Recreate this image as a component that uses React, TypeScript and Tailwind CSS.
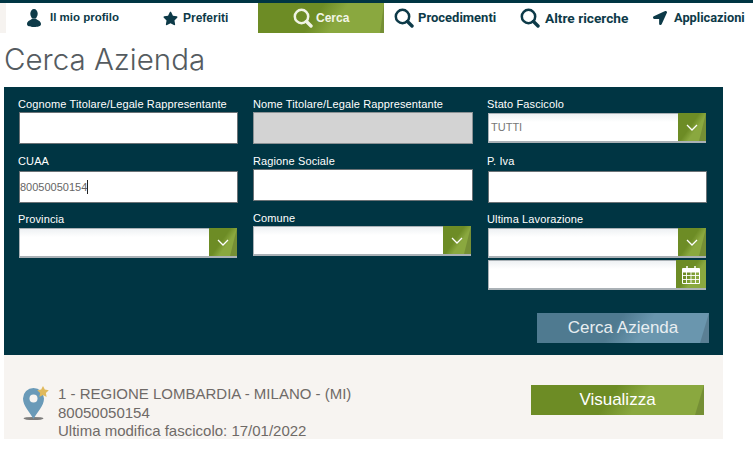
import { FaLocationArrow, FaStar } from 'react-icons/fa';

const greenButton = 'bg-[linear-gradient(125deg,#6d8c25_0%,#6d8c25_45%,#8aa83f_62%,#8aa83f_100%)]';

function Corner({ w = 'w-[9px]' }: { w?: string }) {
  return <span className={`absolute right-0 top-0 bottom-0 ${w} bg-[#000]/15 [clip-path:polygon(100%_0,100%_100%,0_100%)]`} />;
}

function Label({ children, className = '' }: { children: string; className?: string }) {
  return <label className={`block h-[14px] text-[11px] leading-[14px] tracking-[0.12px] text-white whitespace-nowrap ${className}`}>{children}</label>;
}

function TextInput({ value, disabled, caret }: { value?: string; disabled?: boolean; caret?: boolean }) {
  return (
    <div className={`flex items-center h-[32px] w-full border text-[11px] text-[#666] ${disabled ? 'bg-[#d3d3d3] border-[#8b9194]' : 'bg-white border-[#6b7276]'}`}>
      {value}
      {caret && <span className="w-px h-[14px] bg-[#222]" />}
    </div>
  );
}

function Chevron() {
  return (
    <svg width="12" height="7" viewBox="0 0 12 7" fill="none" stroke="#fff" strokeWidth="1.3">
      <path d="M1 1l5 5 5-5" />
    </svg>
  );
}

function SelectBox({ value }: { value?: string }) {
  return (
    <div className="flex h-[30px] w-[218px] border-b-2 border-[#aab1b6]">
      <div className="flex-1 flex items-center pl-[2px] border-l border-t border-[#aab1b6] bg-[linear-gradient(#eef1f3,#fff_30%)] text-[11px] text-[#777]">{value}</div>
      <div className={`relative flex items-center justify-center w-[28px] ${greenButton}`}>
        <Chevron />
        <Corner w="w-[7px]" />
      </div>
    </div>
  );
}

function CalendarIcon() {
  return (
    <svg width="18" height="19" viewBox="0 0 18 19" fill="none" stroke="#fff" strokeWidth="1">
      <path d="M0.5 3.5h17v15h-17z" />
      <path d="M1 4h16v3H1z" fill="#fff" />
      <path d="M5 1v4M13 1v4" strokeWidth="1.5" />
      <path d="M0.5 10.5h17M0.5 14.5h17M4.5 7v11M9 7v11M13.5 7v11" strokeWidth="0.9" />
    </svg>
  );
}

function SearchIcon({ className = '' }: { className?: string }) {
  return (
    <svg className={className} width="20" height="20" viewBox="0 0 20 20" fill="none" stroke="currentColor">
      <circle cx="8.500" cy="8.500" r="6.700" strokeWidth="2.500" />
      <path d="M13.500 13.500L18 18" strokeWidth="3.400" strokeLinecap="round" />
    </svg>
  );
}

function UserIcon() {
  return (
    <svg className="mr-[9px]" width="14" height="18" viewBox="0 0 14 18" fill="currentColor">
      <ellipse cx="7" cy="4.800" rx="3.700" ry="4.800" />
      <path d="M5 9.500C4.800 11 0 11.500 0 15c0 2.200 3 3 7 3s7-.8 7-3c0-3.500-4.800-4-5-5.500z" />
    </svg>
  );
}

function NavItem({ icon, label, className = '' }: { icon: React.ReactNode; label: string; className?: string }) {
  return (
    <a className={`flex items-center font-bold text-[#0d3a48] whitespace-nowrap ${className}`}>
      {icon}
      {label}
    </a>
  );
}

export default function App() {
  return (
    <div className="w-[753px] h-[460px] overflow-hidden bg-white font-['Liberation_Sans',sans-serif]">
      <div className="h-[3px] bg-[#003543]" />
      <nav className="flex h-[30px] items-center">
        <div className="w-[6px] h-full bg-[#f6f3f0]" />
        <NavItem className="ml-[21px] w-[136px] text-[11.500px]" icon={<UserIcon />} label="Il mio profilo" />
        <NavItem className="w-[95px] text-[12px]" icon={<FaStar size={15} className="mr-[5px]" />} label="Preferiti" />
        <a className={`relative flex items-center h-full w-[126px] pl-[35px] text-[12px] font-bold text-[#f2f5e8] ${greenButton}`}>
          <SearchIcon className="mr-[3px] text-[#f0f3e4]" />
          Cerca
          <Corner w="w-[4px]" />
        </a>
        <NavItem className="ml-[10px] w-[126px] text-[13px] font-['Roboto',sans-serif]" icon={<SearchIcon className="mr-[4px]" />} label="Procedimenti" />
        <NavItem className="w-[133px] text-[13.700px] font-['Roboto',sans-serif]" icon={<SearchIcon className="mr-[5px]" />} label="Altre ricerche" />
        <NavItem className="text-[12.800px] font-['Roboto',sans-serif]" icon={<FaLocationArrow size={14} className="mr-[7px]" />} label="Applicazioni" />
      </nav>
      <h1 className="ml-[4px] h-[54px] pt-[8px] text-[29.500px] leading-[36px] font-light font-['Inter',sans-serif] text-[#555b60]">Cerca Azienda</h1>

      <section className="ml-[4px] w-[719px] h-[268px] bg-[#003543] pl-[15px] pt-[10px]">
        <div className="flex gap-[15px]">
          <div className="w-[219px]">
            <Label className="-ml-px mb-px">Cognome Titolare/Legale Rappresentante</Label>
            <TextInput />
            <Label className="-ml-px mt-[10px] mb-[3px]">CUAA</Label>
            <TextInput value="80050050154" caret />
            <Label className="-ml-px mt-[9px] mb-[2px]">Provincia</Label>
            <SelectBox />
          </div>
          <div className="w-[220px]">
            <Label className="mb-px">Nome Titolare/Legale Rappresentante</Label>
            <TextInput disabled />
            <Label className="mt-[10px] mb-px">Ragione Sociale</Label>
            <TextInput />
            <Label className="mt-[10px] mb-px">Comune</Label>
            <SelectBox />
          </div>
          <div className="w-[219px]">
            <Label className="-ml-px mb-[2px]">Stato Fascicolo</Label>
            <SelectBox value="TUTTI" />
            <Label className="-ml-px mt-[11px] mb-[3px]">P. Iva</Label>
            <TextInput />
            <Label className="-ml-px mt-[9px] mb-[2px]">Ultima Lavorazione</Label>
            <SelectBox />
            <div className="mt-[2px] flex h-[30px] w-[218px] border-b-2 border-[#aab1b6]">
              <div className="flex-1 border-l border-t border-[#aab1b6] bg-[linear-gradient(#eef1f3,#fff_30%)]" />
              <div className={`relative flex items-center justify-center w-[30px] ${greenButton}`}>
                <CalendarIcon />
              </div>
            </div>
            <div className="mt-[23px] ml-[49px] relative flex items-center justify-center w-[172px] h-[30px] text-[17px] text-[#e8eef1] bg-[linear-gradient(125deg,#4f7a90_0%,#4f7a90_45%,#6a96ae_62%,#6a96ae_100%)]">
              Cerca Azienda
              <Corner />
            </div>
          </div>
        </div>
      </section>

      <section className="relative ml-[4px] w-[719px] h-[84px] bg-[#f7f4f1] flex">
        <svg className="ml-[18px] mt-[30px]" width="30" height="36" viewBox="0 0 30 36">
          <ellipse cx="11.500" cy="33.500" rx="10" ry="1.600" fill="#4a4a4a" opacity="0.7" />
          <path d="M11.500 34C8 27 1 21 1 13.500A10.500 10.500 0 0 1 22 13.500C22 21 15 27 11.500 34Z" fill="#6a9ab8" />
          <circle cx="11.500" cy="13.500" r="4" fill="#f7f4f1" />
          <path d="M21 1l1.800 3.600 4 .6-2.900 2.800.7 4L21 10.100 17.400 12l.7-4-2.900-2.800 4-.6z" fill="#e0b95c" />
        </svg>
        <div className="ml-[6px] pt-[30px] text-[15px] leading-[18.500px] text-[#6f6a67] whitespace-nowrap">
          <div>1 - REGIONE LOMBARDIA - MILANO - (MI)</div>
          <div>80050050154</div>
          <div>Ultima modifica fascicolo: 17/01/2022</div>
        </div>
        <a className={`absolute left-[527px] top-[30px] flex items-center justify-center w-[173px] h-[30px] text-[17px] text-white ${greenButton}`}>
          Visualizza
          <Corner />
        </a>
      </section>
    </div>
  );
}
